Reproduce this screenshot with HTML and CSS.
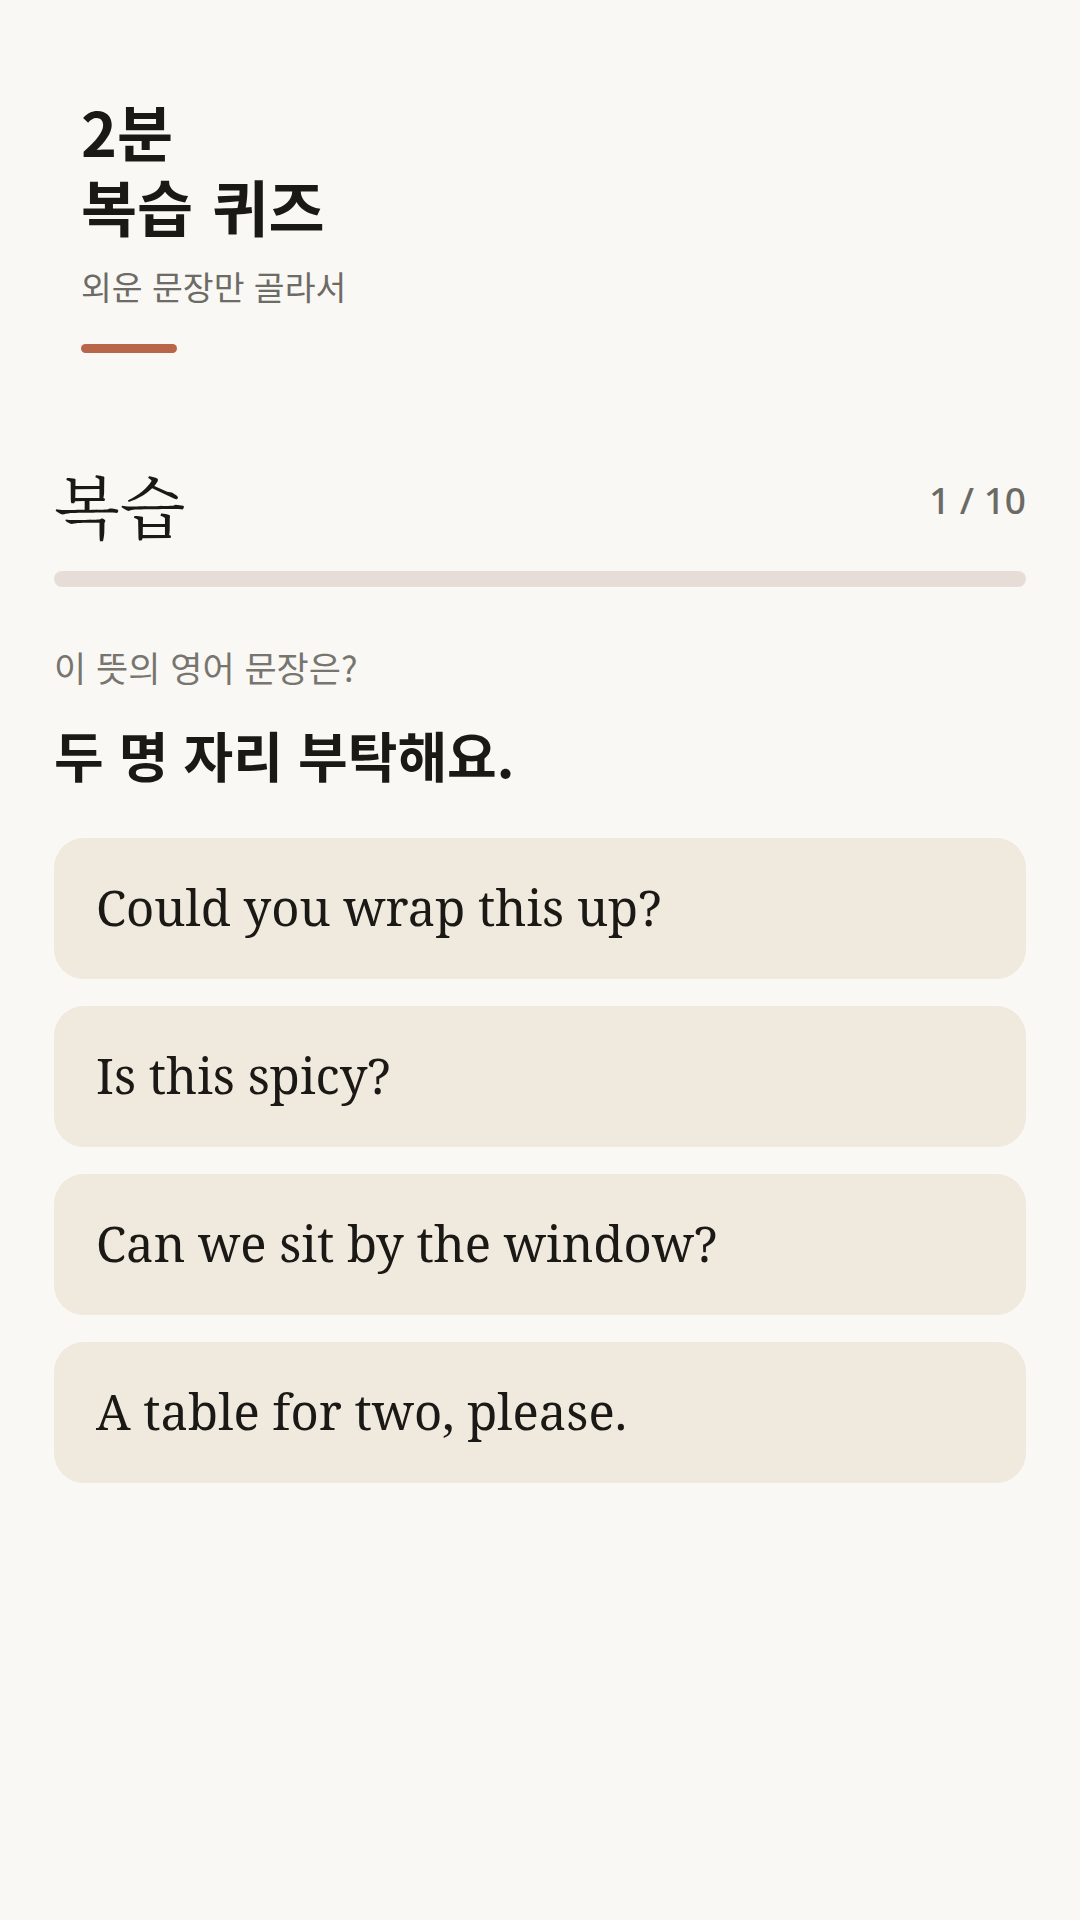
FILE: index.html
```html
<!DOCTYPE html>
<html lang="ko">
<head>
  <meta charset="UTF-8">
  <title>2분 복습 퀴즈</title>
  <link rel="stylesheet" href="styles.css">
</head>
<body>

  <div class="page">
    <header class="hero">
      <h1><span class="line">2분</span><span class="line">복습 퀴즈</span></h1>
      <p class="subtitle">외운 문장만 골라서</p>
      <div class="accent"></div>
    </header>

    <section class="quiz">
      <div class="quiz-head">
        <h2>복습</h2>
        <span class="count">1 / 10</span>
      </div>
      <div class="track"><div class="fill"></div></div>

      <p class="prompt">이 뜻의 영어 문장은?</p>
      <p class="question">두 명 자리 부탁해요.</p>

      <div class="options">
        <button class="option">Could you wrap this up?</button>
        <button class="option">Is this spicy?</button>
        <button class="option">Can we sit by the window?</button>
        <button class="option">A table for two, please.</button>
      </div>
    </section>
  </div>

</body>
</html>
```

FILE: styles.css
```css
* {
  box-sizing: border-box;
}
body {
  margin: 0;
  background-color: #faf8f4;
  color: #1a1915;
  font-family: "Noto Sans CJK KR", "Noto Sans KR", "Noto Sans", sans-serif;
}

.page {
  padding: 0 54px;
}

.hero {
  padding: 93px 27px 0;
}

h1 {
  margin: 0;
  font-size: 61px;
  line-height: 75px;
  font-weight: 700;
  word-spacing: 2px;
}

h1 .line {
  display: block;
  height: 75px;
}

.subtitle {
  margin: 20px 0 0;
  font-size: 33.5px;
  line-height: 1.4;
  color: #6d6b65;
}

.accent {
  width: 96px;
  height: 9px;
  margin-top: 34px;
  border-radius: 5px;
  background-color: #b9654a;
}

.quiz {
  margin-top: 112px;
}

.quiz-head {
  display: flex;
  justify-content: space-between;
  align-items: center;
  height: 77px;
}

h2 {
  margin: 0;
  font-family: "Noto Serif CJK KR", "Noto Serif KR", "Noto Serif", serif;
  font-size: 68px;
  font-weight: 400;
  line-height: 77px;
}

.count {
  margin-bottom: 8px;
  font-family: "Noto Sans", "Noto Sans CJK KR", sans-serif;
  font-size: 37px;
  font-weight: 500;
  color: #6b6a64;
}

.track {
  height: 16px;
  margin-top: 29px;
  border-radius: 8px;
  background-color: #e6ded6;
  overflow: hidden;
}

.fill {
  width: 0;
  height: 100%;
  background-color: #b9654a;
}

.prompt {
  margin: 55px 0 0;
  font-size: 35px;
  line-height: 1.4;
  color: #77756e;
}

.question {
  margin: 29px 0 0;
  font-size: 54px;
  line-height: 1.3;
  font-weight: 700;
}

.options {
  display: flex;
  flex-direction: column;
  gap: 27px;
  margin-top: 48px;
}

.option {
  display: flex;
  align-items: center;
  height: 141px;
  padding: 0 42px 3px;
  border: none;
  border-radius: 30px;
  background-color: #f0e9de;
  color: #1a1915;
  font-family: "Noto Serif", "DejaVu Serif", serif;
  font-size: 49px;
  text-align: left;
  cursor: pointer;
}
```
